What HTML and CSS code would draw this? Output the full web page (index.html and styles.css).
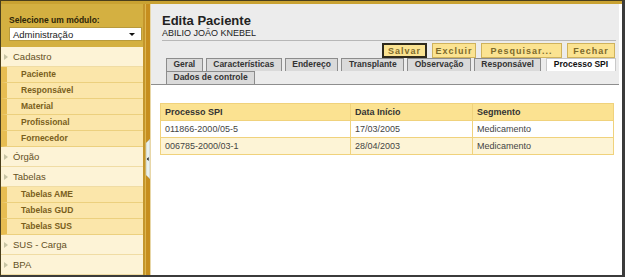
FILE: index.html
```
<!DOCTYPE html>
<html lang="pt-BR">
<head>
    <meta charset="UTF-8">
    <meta name="viewport" content="width=device-width, initial-scale=1.0">
    <title>Edita Paciente</title>
    <link rel="stylesheet" href="styles.css">
</head>
<body>
    <div class="app">
        <div class="topline"></div>
        <div class="body-row">
            <aside class="sidebar">
                <div class="module">
                    <div class="module-label">Selecione um módulo:</div>
                    <div class="module-select">
                        <span>Administração</span>
                        <span class="caret"></span>
                    </div>
                </div>
                <ul class="menu">
                    <li class="menu-item">Cadastro</li>
                    <li class="sub-item">Paciente</li>
                    <li class="sub-item">Responsável</li>
                    <li class="sub-item">Material</li>
                    <li class="sub-item">Profissional</li>
                    <li class="sub-item">Fornecedor</li>
                    <li class="menu-item">Órgão</li>
                    <li class="menu-item">Tabelas</li>
                    <li class="sub-item">Tabelas AME</li>
                    <li class="sub-item">Tabelas GUD</li>
                    <li class="sub-item">Tabelas SUS</li>
                    <li class="menu-item">SUS - Carga</li>
                    <li class="menu-item">BPA</li>
                </ul>
            </aside>

            <div class="splitter">
                <span class="splitter-tab">
                    <svg width="5" height="40" viewBox="0 0 5 40">
                        <path d="M5 0 L1 4 L1 36 L5 40 Z" fill="#e9f1ee" stroke="#b9b39a" stroke-width="0.6"/>
                        <path d="M3.6 18 L1.8 20 L3.6 22 Z" fill="#111"/>
                    </svg>
                </span>
            </div>

            <main class="content">
                <div class="content-head">
                    <h1 class="title">Edita Paciente</h1>
                    <p class="patient">ABILIO JOÃO KNEBEL</p>
                    <div class="head-rule"></div>
                    <div class="actions">
                        <button class="btn btn-default btn-salvar">Salvar</button>
                        <button class="btn btn-excluir">Excluir</button>
                        <button class="btn btn-pesquisar">Pesquisar...</button>
                        <button class="btn btn-fechar">Fechar</button>
                    </div>
                    <div class="tabs">
                        <div class="tab-row">
                            <span class="tab">Geral</span>
                            <span class="tab">Características</span>
                            <span class="tab">Endereço</span>
                            <span class="tab">Transplante</span>
                            <span class="tab">Observação</span>
                            <span class="tab">Responsável</span>
                            <span class="tab tab-active">Processo SPI</span>
                        </div>
                        <div class="tab-row">
                            <span class="tab">Dados de controle</span>
                        </div>
                    </div>
                </div>

                <div class="content-body">
                    <table class="grid">
                        <thead>
                            <tr>
                                <th class="col-proc">Processo SPI</th>
                                <th class="col-data">Data Início</th>
                                <th>Segmento</th>
                            </tr>
                        </thead>
                        <tbody>
                            <tr>
                                <td>011866-2000/05-5</td>
                                <td>17/03/2005</td>
                                <td>Medicamento</td>
                            </tr>
                            <tr class="alt">
                                <td>006785-2000/03-1</td>
                                <td>28/04/2003</td>
                                <td>Medicamento</td>
                            </tr>
                        </tbody>
                    </table>
                </div>
            </main>
        </div>
    </div>
</body>
</html>
```
FILE: styles.css
```
* {
    margin: 0;
    padding: 0;
    box-sizing: border-box;
}
body {
    background-color: #3b3b3b;
    font-family: "Liberation Sans", Arial, sans-serif;
}
.app {
    width: 625px;
    height: 277px;
    display: flex;
    flex-direction: column;
    border-top: 1px solid #4a3f1c;
    border-left: 1px solid #4a3f1c;
    border-right: 3px solid #3b3b3b;
    border-bottom: 2px solid #3b3b3b;
    background-color: #d4b041;
    overflow: hidden;
}
.topline {
    height: 3px;
    background-color: #c9a232;
}
.body-row {
    flex: 1;
    display: flex;
    min-height: 0;
}

/* sidebar */
.sidebar {
    width: 144px;
    display: flex;
    flex-direction: column;
    background-color: #fdf3d6;
    border-right: 2px solid #c4962c;
}
.module {
    height: 44px;
    padding: 11px 1px 0 8px;
    background-color: #d4b041;
}
.module-label {
    font-size: 8.5px;
    font-weight: bold;
    line-height: 10px;
    color: #2e2508;
}
.module-select {
    margin-top: 2px;
    height: 14px;
    padding: 0 6px 0 3px;
    display: flex;
    align-items: center;
    justify-content: space-between;
    background-color: #fff;
    border: 1px solid #b89a3c;
    font-size: 9.5px;
    color: #222;
}
.caret {
    border-top: 3px solid #111;
    border-left: 3px solid transparent;
    border-right: 3px solid transparent;
}
.menu {
    list-style: none;
}
.menu-item {
    position: relative;
    height: 20px;
    line-height: 19px;
    padding-left: 12px;
    font-size: 9.5px;
    color: #64501e;
    border-bottom: 1px solid #f0dca4;
}
.menu-item::before {
    content: "";
    position: absolute;
    left: 3px;
    top: 7px;
    border-left: 4px solid #c8c4a4;
    border-top: 3px solid transparent;
    border-bottom: 3px solid transparent;
}
.sub-item {
    height: 16px;
    line-height: 15px;
    padding-left: 14px;
    font-size: 8.5px;
    font-weight: bold;
    color: #7a5f1d;
    background-color: #fbe6aa;
    border-left: 6px solid #e7bd52;
    border-bottom: 1px solid #ecd07e;
}

/* splitter */
.splitter {
    position: relative;
    width: 6px;
    background-color: #c68e1e;
    border-left: 1px solid #ddb650;
    border-right: 1px solid #e8d7a8;
}
.splitter-tab {
    position: absolute;
    left: -1px;
    top: 135px;
    width: 5px;
    height: 40px;
}

/* main content */
.content {
    flex: 1;
    display: flex;
    flex-direction: column;
    background-color: #fff;
    padding-right: 3px;
}
.content-head {
    padding: 10px 3px 0 11px;
    background-color: #ececec;
    border-bottom: 1px solid #8e8e8e;
}
.title {
    font-size: 13px;
    line-height: 14px;
    color: #222;
}
.patient {
    font-size: 9px;
    line-height: 11px;
    color: #222;
}
.head-rule {
    margin-top: 1px;
    height: 1px;
    background-color: #b7b7b7;
}
.actions {
    margin-top: 2px;
    padding-right: 1px;
    display: flex;
    justify-content: flex-end;
    gap: 5px;
}
.btn {
    height: 15px;
    font-family: "Liberation Sans", Arial, sans-serif;
    font-size: 9px;
    font-weight: bold;
    letter-spacing: 1px;
    color: #7d6a2c;
    background-color: #fbe391;
    border: 1px solid #cfb25c;
    cursor: pointer;
}
.btn-default {
    border: 2px solid #2f2a1c;
}
.btn-salvar {
    width: 45px;
}
.btn-excluir {
    width: 44px;
}
.btn-pesquisar {
    width: 81px;
}
.btn-fechar {
    width: 48px;
}
.tabs {
    padding-left: 4px;
}
.tab-row {
    display: flex;
    gap: 3px;
}
.tab {
    flex-shrink: 0;
    height: 13px;
    padding: 0 6.5px;
    font-size: 8.5px;
    font-weight: bold;
    line-height: 11px;
    white-space: nowrap;
    color: #333;
    background-color: #dadada;
    border: 1px solid #8c8c8c;
    border-bottom: none;
}
.tab-active {
    margin-left: 2px;
    background-color: #fff;
    border-color: #c9c9c9;
    color: #111;
}

/* table */
.content-body {
    flex: 1;
    padding: 18px 4px 0 9px;
}
.grid {
    width: 454px;
    border-collapse: collapse;
    font-size: 9px;
    color: #444;
}
.grid th,
.grid td {
    height: 17px;
    padding: 0 4px;
    text-align: left;
    border: 1px solid #f0d27c;
}
.grid th {
    font-weight: bold;
    color: #333;
    background-color: #fbe291;
}
.grid td {
    background-color: #fff;
}
.grid .alt td {
    background-color: #fdf4d6;
}
.col-proc {
    width: 190px;
}
.col-data {
    width: 122px;
}
```
